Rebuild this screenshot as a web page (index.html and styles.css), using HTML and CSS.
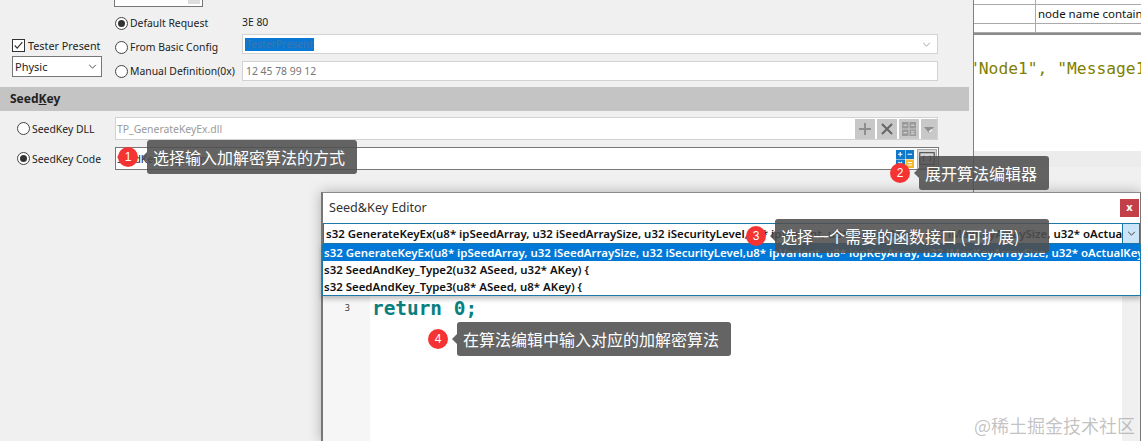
FILE: index.html
```html
<!DOCTYPE html>
<html lang="zh">
<head>
<meta charset="utf-8">
<title>Seed&amp;Key Editor</title>
<link rel="stylesheet" href="styles.css">
</head>
<body>
<div class="app">
  <section class="left">
    <div class="stub"><span class="spin"></span></div>
    <div class="request">
      <div class="tester">
        <label class="check-row"><span class="check"><svg viewBox="0 0 13 13" width="11" height="11"><path d="M2 6.5l3 3.2L11 2.5" fill="none" stroke="#333" stroke-width="1.4"/></svg></span>Tester Present</label>
        <div class="select">Physic<svg class="chev" viewBox="0 0 10 6" width="9" height="5"><path d="M1 1l4 4 4-4" fill="none" stroke="#444" stroke-width="1.1"/></svg></div>
      </div>
      <label class="radio-row"><span class="radio on"></span>Default Request</label>
      <div class="value">3E 80</div>
      <label class="radio-row"><span class="radio"></span>From Basic Config</label>
      <div class="field raised"><span class="selected">TesterPresent</span><svg class="chev light" viewBox="0 0 10 6" width="9" height="5"><path d="M1 1l4 4 4-4" fill="none" stroke="#999" stroke-width="1.1"/></svg></div>
      <label class="radio-row"><span class="radio"></span>Manual Definition(0x)</label>
      <div class="field muted">12 45 78 99 12</div>
    </div>
    <h2 class="band">Seed<u>K</u>ey</h2>
    <div class="seed-row">
      <label class="seed-label"><span class="radio"></span>SeedKey DLL</label>
      <div class="seed-input disabled">
        <span class="dll-name">TP_GenerateKeyEx.dll</span>
        <span class="tools">
          <span class="tool"><svg viewBox="0 0 20 20" width="20" height="20"><path d="M10 4v12M4 10h12" stroke="#8e8e8e" stroke-width="2"/></svg></span>
          <span class="tool"><svg viewBox="0 0 20 20" width="20" height="20"><path d="M5 5l10 10M15 5L5 15" stroke="#666" stroke-width="2"/></svg></span>
          <span class="tool"><svg viewBox="0 0 20 20" width="20" height="20"><path d="M3 3h6.500v6.500H3zM10.500 3H17v6.500h-6.500zM3 10.500h6.500V17H3zM10.500 10.500H17V17h-6.500z" fill="#9a9a9a"/><path d="M4.500 6.200h3.500M12 6.200h3.500M4.500 13.700h3.500M12 12.800h3.500M12 14.800h3.500" stroke="#ddd"/></svg></span>
          <span class="tool narrow"><svg viewBox="0 0 16 20" width="16" height="20"><path d="M3 8h10l-5 6z" fill="#8f8f8f"/><path d="M8 13l3-2.500" stroke="#fff" stroke-width="1.200"/></svg></span>
        </span>
      </div>
    </div>
    <div class="seed-row">
      <label class="seed-label"><span class="radio on"></span>SeedKey Code</label>
      <div class="seed-input active">
        <span class="code-name">SeedKey_Impl.cfm</span>
        <span class="tools live">
          <svg viewBox="0 0 20 20" width="20" height="20"><rect x="1" y="1" width="9" height="9" fill="#0f78c8"/><rect x="10.500" y="1" width="8.500" height="9" fill="#0f78c8"/><rect x="1" y="10.500" width="9" height="8.500" fill="#0f78c8"/><rect x="10.500" y="10.500" width="8.500" height="8.500" fill="#f5b82e"/><path d="M3 5.200h4.500M5.200 3v4.500M12.500 5.200h4.500M12.500 13.500h4.500M12.500 16h4.500M3.500 13l3.500 3.500M7 13l-3.500 3.500" stroke="#fff" stroke-width="1.100"/></svg>
          <span class="expand"><svg viewBox="0 0 20 20" width="18" height="18"><rect x="2" y="3" width="16" height="13" fill="#d8d8d8" stroke="#444" stroke-width="1.200"/><path d="M7.500 7H6v5h1.500M12.500 7H14v5h-1.500" fill="none" stroke="#333"/></svg></span>
        </span>
      </div>
    </div>
  </section>

  <section class="right">
    <div class="grid-table">
      <div class="grid-row short"><span class="cell first"></span><span class="cell"></span></div>
      <div class="grid-row"><span class="cell first"></span><span class="cell">node name contains</span></div>
      <div class="grid-row tiny"><span class="cell first"></span><span class="cell"></span></div>
    </div>
    <div class="code-pane"><pre class="code-line">"Node1", "Message1"</pre></div>
    <div class="pane-foot"></div>
  </section>
</div>

<div class="dialog">
  <header class="dialog-title">Seed&amp;Key Editor<span class="close">x</span></header>
  <div class="combo">
    <span class="combo-text">s32 GenerateKeyEx(u8* ipSeedArray, u32 iSeedArraySize, u32 iSecurityLevel,u8* ipVariant, u8* iopKeyArray, u32 iMaxKeyArraySize, u32* oActualKeyArraySize) {</span>
    <span class="combo-btn"><svg viewBox="0 0 10 6" width="9" height="5"><path d="M1 1l4 4 4-4" fill="none" stroke="#333" stroke-width="1.1"/></svg></span>
  </div>
  <div class="editor">
    <div class="gutter"><span class="line-no">3</span></div>
    <pre class="source">return 0;</pre>
    <div class="scrollbar"></div>
  </div>
  <ul class="dropdown">
    <li class="picked">s32 GenerateKeyEx(u8* ipSeedArray, u32 iSeedArraySize, u32 iSecurityLevel,u8* ipVariant, u8* iopKeyArray, u32 iMaxKeyArraySize, u32* oActualKeyArraySize) {</li>
    <li>s32 SeedAndKey_Type2(u32 ASeed, u32* AKey) {</li>
    <li>s32 SeedAndKey_Type3(u8* ASeed, u8* AKey) {</li>
  </ul>
</div>

<div class="note note-1"><span class="badge">1</span><span class="tip">选择输入加解密算法的方式</span></div>
<div class="note note-2"><span class="badge">2</span><span class="tip">展开算法编辑器</span></div>
<div class="note note-3"><span class="badge">3</span><span class="tip">选择一个需要的函数接口 (可扩展)</span></div>
<div class="note note-4"><span class="badge">4</span><span class="tip">在算法编辑中输入对应的加解密算法</span></div>
<div class="watermark">@稀土掘金技术社区</div>
</body>
</html>
```
FILE: styles.css
```css
* { box-sizing: border-box; }
html, body { margin: 0; padding: 0; }
body {
  position: relative;
  width: 1141px;
  height: 441px;
  overflow: hidden;
  background: #f0f0f0;
  color: #222;
  font: 10.400px "Noto Sans", "Noto Sans CJK SC", sans-serif;
}
.app { display: flex; height: 441px; }

/* left settings panel */
.left { width: 973px; flex: none; background: #f0f0f0; }
.stub {
  position: relative;
  width: 89px;
  height: 7px;
  margin-left: 114px;
  background: #fff;
  border: 1px solid #777;
  border-top: 0;
}
.spin { position: absolute; right: 2px; top: 0; width: 12px; height: 4px; background: #ddd; }
.request {
  display: grid;
  grid-template-columns: 127px 696px;
  grid-template-rows: 24px 24px 24px;
  align-items: center;
  margin: 4px 0 0 12px;
  padding-left: 103px;
  position: relative;
}
.tester { position: absolute; left: 0; top: 24px; width: 90px; }
.check-row { display: flex; align-items: center; height: 20px; gap: 3px; white-space: nowrap; font-size: 10.800px; }
.check {
  display: flex;
  align-items: center;
  justify-content: center;
  width: 13px;
  height: 13px;
  border: 1px solid #333;
  background: #fff;
}
.select {
  display: flex;
  align-items: center;
  justify-content: space-between;
  height: 21px;
  margin-top: 1px;
  padding: 0 3px 0 2px;
  background: #fff;
  border: 1px solid #777;
  font-size: 11px;
}
.chev { margin-right: 1px; }
.chev.light { margin-right: 6px; }
.radio-row { display: flex; align-items: center; gap: 2px; white-space: nowrap; }
.radio {
  display: inline-flex;
  align-items: center;
  justify-content: center;
  flex: none;
  width: 13px;
  height: 13px;
  border: 1px solid #444;
  border-radius: 50%;
  background: #fff;
}
.radio.on::after { content: ""; width: 7px; height: 7px; border-radius: 50%; background: #333; }
.value { padding-bottom: 3px; }
.field {
  display: flex;
  align-items: center;
  justify-content: space-between;
  height: 20px;
  padding-left: 2px;
  background: #fff;
  border: 1px solid #d2d2d2;
}
.field.raised { margin-bottom: 6px; }
.field.muted { color: #777; padding-left: 3px; }
.selected { padding: 0 1px; background: #0a78d2; color: #3f74ad; line-height: 13px; }
.band {
  width: 969px;
  height: 24px;
  margin: 4px 0 6px;
  padding-left: 10px;
  background: #c4c4c4;
  font-size: 12px;
  font-weight: 700;
  line-height: 24px;
}
.seed-row { display: flex; align-items: center; height: 23px; margin-bottom: 7px; padding-left: 17px; }
.seed-label { display: flex; align-items: center; gap: 2px; width: 98px; flex: none; white-space: nowrap; }
.seed-input {
  display: flex;
  align-items: center;
  justify-content: space-between;
  height: 23px;
  padding-left: 1px;
  background: #fff;
}
.seed-input.disabled { width: 823px; border: 1px solid #d2d2d2; color: #999; }
.seed-input.active { width: 824px; border: 1px solid #777; }
.tools { display: flex; gap: 2px; }
.tool { display: flex; width: 20px; height: 20px; background: #c8c8c8; }
.tool.narrow { width: 16px; }
.tools.live { align-items: center; gap: 2px; padding-right: 1px; }
.expand { display: flex; width: 20px; height: 20px; align-items: center; justify-content: center; background: #d4d4d4; border: 1px solid #aaa; }

/* right code pane */
.right { flex: 1; min-width: 0; border-left: 1px solid #808080; overflow: hidden; }
.grid-table { height: 35px; border-bottom: 2px solid #8a8a8a; background: #fff; }
.grid-row { display: flex; height: 19px; border-bottom: 1px solid #aaa; }
.grid-row.short { height: 5px; }
.grid-row.tiny { height: 9px; }
.cell { flex: 1; padding-left: 2px; font: 11.500px/18px "Noto Sans", sans-serif; white-space: nowrap; color: #111; }
.cell.first { flex: none; width: 62px; border-right: 1px solid #aaa; }
.code-pane { height: 116px; padding-top: 25px; background: #fff; }
.code-line { margin: 0 0 0 -5px; font: 16.300px/18px "DejaVu Sans Mono", monospace; color: #808000; }
.pane-foot { height: 16px; background: #ececec; }

/* dialog window */
.dialog {
  position: absolute;
  left: 321px;
  top: 192px;
  width: 820px;
  height: 249px;
  display: flex;
  flex-direction: column;
  background: #fff;
  border-top: 1px solid #8a8a8a;
  border-left: 2px solid #777;
  border-right: 1px solid #777;
  box-shadow: 0 0 12px rgba(0, 0, 0, .28);
}
.dialog-title {
  display: flex;
  align-items: center;
  justify-content: space-between;
  height: 30px;
  flex: none;
  padding: 0 1px 2px 6px;
  font-size: 12.600px;
  color: #333;
}
.close {
  width: 19px;
  height: 18px;
  margin-top: 2px;
  background: #c44048;
  color: #fff;
  font-size: 11px;
  font-weight: 700;
  line-height: 16px;
  text-align: center;
}
.combo {
  display: flex;
  align-items: stretch;
  height: 21px;
  flex: none;
  background: #fff;
  border: 1px solid #1c78a8;
}
.combo-text, .dropdown li {
  overflow: hidden;
  white-space: nowrap;
  font-size: 11.450px;
  font-weight: 600;
  line-height: 17px;
  color: #111;
}
.combo-text { flex: 1; padding: 1px 0 0 2px; }
.combo-btn { display: flex; width: 17px; align-items: center; justify-content: center; background: #cce4f7; border-left: 1px solid #1c78a8; }
.editor { flex: 1; min-height: 0; display: flex; }
.gutter {
  width: 47px;
  flex: none;
  padding: 55px 20px 0 0;
  background: #f6f6f6;
  text-align: right;
  font-size: 9px;
  line-height: 18px;
  color: #333;
}
.source {
  flex: 1;
  margin: 0;
  padding: 53px 0 0 2px;
  font: 700 19.400px/24px "DejaVu Sans Mono", monospace;
  color: #0a7f80;
}
.scrollbar { width: 18px; flex: none; margin-top: 51px; background: #f0f0f0; }
.dropdown {
  position: absolute;
  left: -1px;
  top: 51px;
  width: 819px;
  height: 52px;
  margin: 0;
  padding: 0;
  list-style: none;
  background: #fff;
  border: 1px solid #1c78a8;
  border-top: 0;
  box-shadow: 0 3px 5px rgba(0, 0, 0, .25);
}
.dropdown li { padding-left: 1px; }
.dropdown li.picked { background: #0078d7; color: #fff; }

/* annotations on top of the screenshot */
.note { position: absolute; display: flex; align-items: center; }
.note-1 { left: 118px; top: 140px; }
.note-2 { left: 890px; top: 156px; }
.note-3 { left: 746px; top: 219px; }
.note-3 .tip { min-width: 274px; }
.note-4 { left: 428px; top: 322px; }
.badge {
  width: 20px;
  height: 20px;
  flex: none;
  border-radius: 50%;
  background: #f53333;
  color: #fff;
  font: 12px/20px "Liberation Sans", sans-serif;
  text-align: center;
}
.tip {
  position: relative;
  height: 34px;
  margin-left: 9px;
  padding: 0 12px 0 6px;
  background: rgba(78, 78, 78, .88);
  border-radius: 3px;
  color: #fff;
  font: 16px/34px "Noto Sans CJK SC", sans-serif;
  white-space: nowrap;
}
.tip::before {
  content: "";
  position: absolute;
  left: -5px;
  top: 12px;
  border: 5px solid transparent;
  border-left: 0;
  border-right-color: rgba(78, 78, 78, .88);
}
.watermark {
  position: absolute;
  right: 6px;
  bottom: 6px;
  color: rgba(120, 120, 120, .45);
  font: 18px/20px "Noto Sans CJK SC", sans-serif;
  white-space: nowrap;
}
```
